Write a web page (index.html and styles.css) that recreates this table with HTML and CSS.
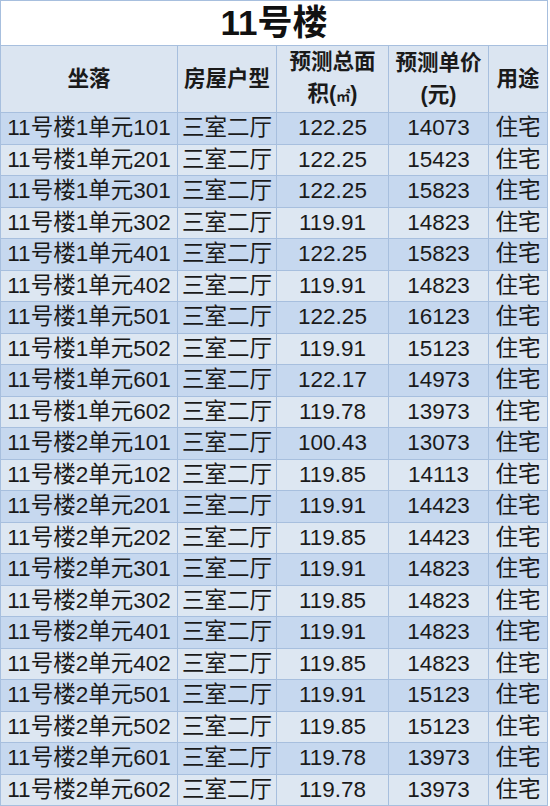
FILE: index.html
```html
<!DOCTYPE html>
<html lang="zh-CN">
<head>
<meta charset="utf-8">
<title>11号楼</title>
<link rel="stylesheet" href="styles.css">
</head>
<body>
<table class="sheet">
  <colgroup>
    <col class="c1"><col class="c2"><col class="c3"><col class="c4"><col class="c5">
  </colgroup>
  <thead>
    <tr class="title"><th colspan="5">11号楼</th></tr>
    <tr class="head">
      <th>坐落</th>
      <th>房屋户型</th>
      <th>预测总面<br>积(<span class="sq">㎡</span>)</th>
      <th>预测单价<br>(元)</th>
      <th>用途</th>
    </tr>
  </thead>
  <tbody>
    <tr><td>11号楼1单元101</td><td>三室二厅</td><td>122.25</td><td>14073</td><td>住宅</td></tr>
    <tr><td>11号楼1单元201</td><td>三室二厅</td><td>122.25</td><td>15423</td><td>住宅</td></tr>
    <tr><td>11号楼1单元301</td><td>三室二厅</td><td>122.25</td><td>15823</td><td>住宅</td></tr>
    <tr><td>11号楼1单元302</td><td>三室二厅</td><td>119.91</td><td>14823</td><td>住宅</td></tr>
    <tr><td>11号楼1单元401</td><td>三室二厅</td><td>122.25</td><td>15823</td><td>住宅</td></tr>
    <tr><td>11号楼1单元402</td><td>三室二厅</td><td>119.91</td><td>14823</td><td>住宅</td></tr>
    <tr><td>11号楼1单元501</td><td>三室二厅</td><td>122.25</td><td>16123</td><td>住宅</td></tr>
    <tr><td>11号楼1单元502</td><td>三室二厅</td><td>119.91</td><td>15123</td><td>住宅</td></tr>
    <tr><td>11号楼1单元601</td><td>三室二厅</td><td>122.17</td><td>14973</td><td>住宅</td></tr>
    <tr><td>11号楼1单元602</td><td>三室二厅</td><td>119.78</td><td>13973</td><td>住宅</td></tr>
    <tr><td>11号楼2单元101</td><td>三室二厅</td><td>100.43</td><td>13073</td><td>住宅</td></tr>
    <tr><td>11号楼2单元102</td><td>三室二厅</td><td>119.85</td><td>14113</td><td>住宅</td></tr>
    <tr><td>11号楼2单元201</td><td>三室二厅</td><td>119.91</td><td>14423</td><td>住宅</td></tr>
    <tr><td>11号楼2单元202</td><td>三室二厅</td><td>119.85</td><td>14423</td><td>住宅</td></tr>
    <tr><td>11号楼2单元301</td><td>三室二厅</td><td>119.91</td><td>14823</td><td>住宅</td></tr>
    <tr><td>11号楼2单元302</td><td>三室二厅</td><td>119.85</td><td>14823</td><td>住宅</td></tr>
    <tr><td>11号楼2单元401</td><td>三室二厅</td><td>119.91</td><td>14823</td><td>住宅</td></tr>
    <tr><td>11号楼2单元402</td><td>三室二厅</td><td>119.85</td><td>14823</td><td>住宅</td></tr>
    <tr><td>11号楼2单元501</td><td>三室二厅</td><td>119.91</td><td>15123</td><td>住宅</td></tr>
    <tr><td>11号楼2单元502</td><td>三室二厅</td><td>119.85</td><td>15123</td><td>住宅</td></tr>
    <tr><td>11号楼2单元601</td><td>三室二厅</td><td>119.78</td><td>13973</td><td>住宅</td></tr>
    <tr><td>11号楼2单元602</td><td>三室二厅</td><td>119.78</td><td>13973</td><td>住宅</td></tr>
  </tbody>
</table>
</body>
</html>
```

FILE: styles.css
```css
html, body {
  margin: 0;
  padding: 0;
  background: #ffffff;
}

body {
  font-family: "Liberation Sans", "Noto Sans CJK SC", sans-serif;
  color: #1a1a1a;
}

.sheet {
  border-collapse: collapse;
  table-layout: fixed;
  width: 547px;
}

.c1 { width: 177px; }
.c2 { width: 99px; }
.c3 { width: 112px; }
.c4 { width: 100px; }
.c5 { width: 59px; }

.sheet th,
.sheet td {
  border: 1px solid #a7bfde;
  padding: 0;
  text-align: center;
  vertical-align: middle;
  white-space: nowrap;
  overflow: hidden;
}

.title th {
  height: 44px;
  background: #ffffff;
  font-size: 35px;
  font-weight: bold;
  color: #111111;
  line-height: 44px;
}

.head th {
  height: 65px;
  background: #dbe5f1;
  font-size: 21.5px;
  font-weight: bold;
  line-height: 32px;
  color: #1a1a1a;
}

.sq {
  font-size: 14px;
}

.sheet td {
  height: 30.5px;
  font-size: 22.5px;
  line-height: 30px;
}

.sheet tbody tr:nth-child(odd) td {
  background: #c6d8ef;
}

.sheet tbody tr:nth-child(even) td {
  background: #dde7f2;
}
```
